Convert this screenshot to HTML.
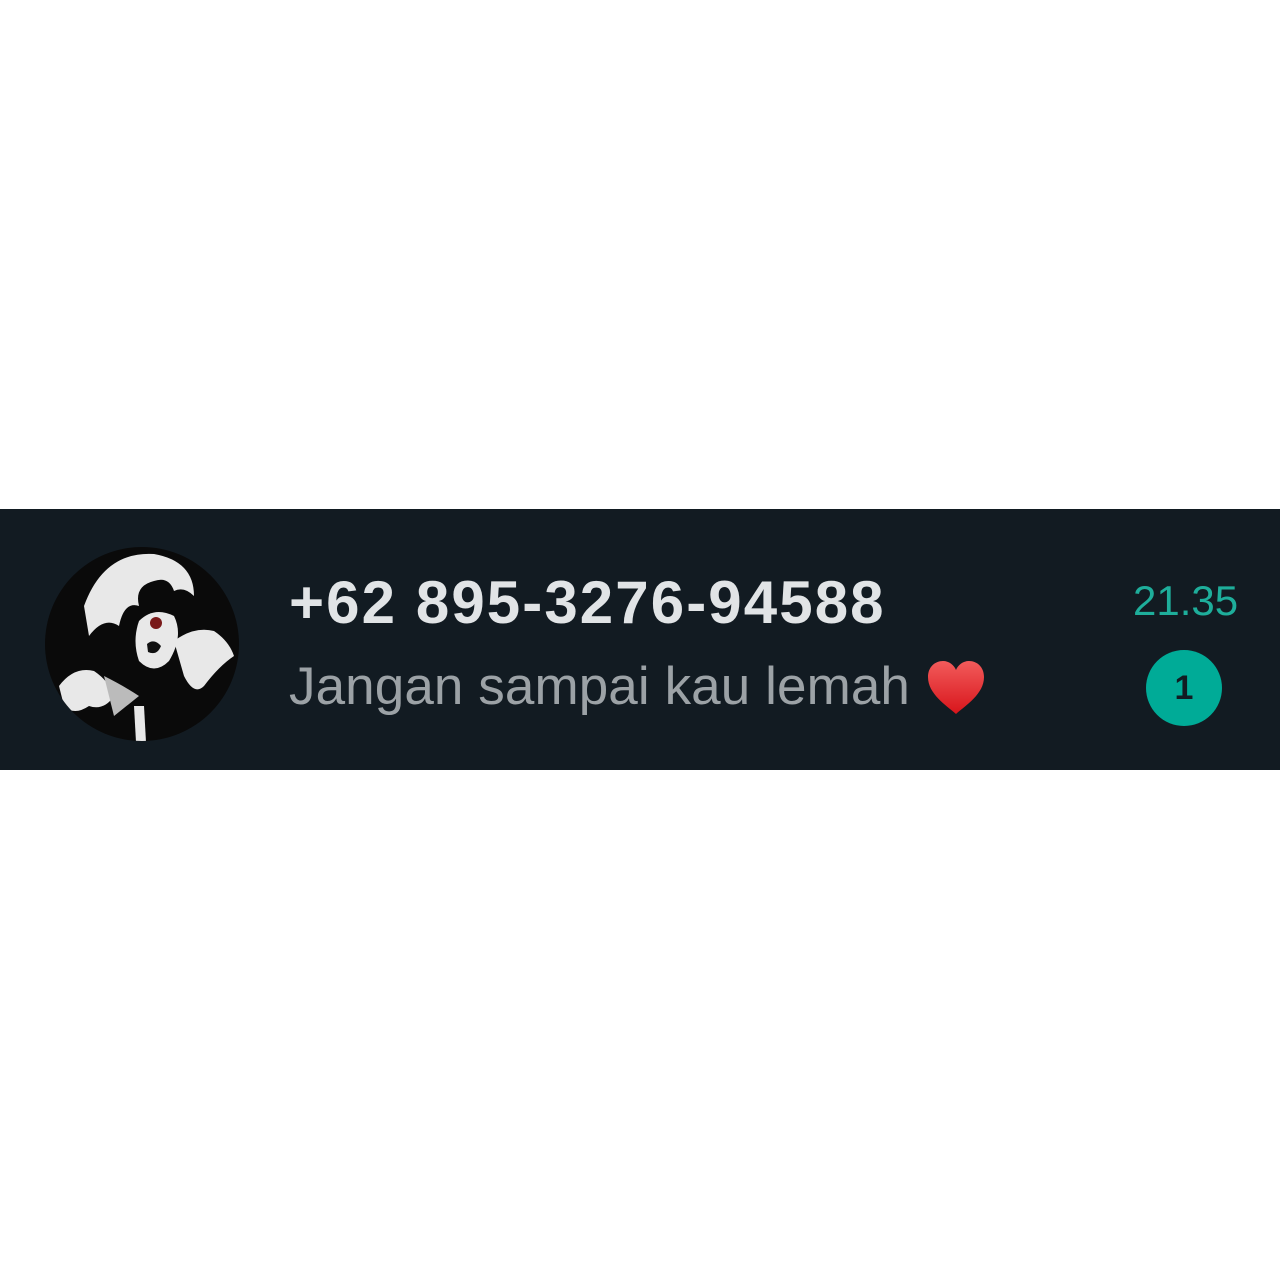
<!DOCTYPE html>
<html><head><style>
body{margin:0;width:1280px;height:1280px;background:#fff;position:relative;overflow:hidden;font-family:"Liberation Sans",sans-serif}
.bar{position:absolute;left:0;top:509px;width:1280px;height:261px;background:#121b22}
.name{position:absolute;left:289px;top:568px;font-size:60px;font-weight:bold;color:#e1e4e6;letter-spacing:2.1px;line-height:70px;white-space:nowrap}
.msg{position:absolute;left:289px;top:655px;font-size:53px;color:#9ca2a6;line-height:64px;white-space:nowrap;letter-spacing:0.1px}
.time{position:absolute;left:1133px;top:576px;font-size:42px;color:#1eae9b;line-height:50px}
.badge{position:absolute;left:1146px;top:650px;width:76px;height:76px;border-radius:50%;background:#00ab97;color:#121b22;font-size:34px;font-weight:bold;text-align:center;line-height:76px}
</style></head><body>
<div class="bar"></div>
<svg style="position:absolute;left:44px;top:546px" width="196" height="196" viewBox="0 0 196 196">
<defs><clipPath id="c"><circle cx="98" cy="98" r="97"/></clipPath></defs>
<circle cx="98" cy="98" r="97" fill="#0a0a0a"/>
<g clip-path="url(#c)" fill="#e8e8e8">
<path d="M40 60 Q60 5 110 8 Q150 15 150 50 Q140 40 130 45 Q125 30 110 35 Q90 40 95 60 Q80 55 75 80 Q60 70 45 90 Z"/>
<path d="M95 75 Q110 60 130 70 Q140 90 125 115 Q110 130 95 115 Q88 95 95 75 Z"/>
<path d="M130 95 Q150 80 170 85 Q185 95 190 110 Q175 120 160 140 Q150 150 140 130 Z"/>
<path d="M15 140 Q30 120 50 125 Q65 135 70 150 Q60 165 45 160 Q30 170 20 160 Z"/>
<path d="M90 160 L100 160 L102 196 L92 196 Z"/>
<path d="M60 130 Q80 140 95 150 L70 170 Z" fill="#bbb"/>
</g>
<circle cx="112" cy="77" r="6" fill="#7a1a1a"/>
<path d="M103 98 Q110 92 117 100 Q113 110 104 106 Z" fill="#111"/>
</svg>
<div class="name">+62 895-3276-94588</div>
<div class="msg">Jangan sampai kau lemah</div>
<svg style="position:absolute;left:926px;top:660px" width="60" height="56" viewBox="0 0 60 56">
<defs><linearGradient id="h" x1="0" y1="0" x2="0" y2="1"><stop offset="0" stop-color="#f25b5b"/><stop offset="1" stop-color="#d8151b"/></linearGradient></defs>
<path d="M30 54 C20 45 2 34 2 17 C2 7 9 1 17 1 C23 1 28 5 30 10 C32 5 37 1 43 1 C51 1 58 7 58 17 C58 34 40 45 30 54 Z" fill="url(#h)"/>
</svg>
<div class="time">21.35</div>
<div class="badge">1</div>
</body></html>
